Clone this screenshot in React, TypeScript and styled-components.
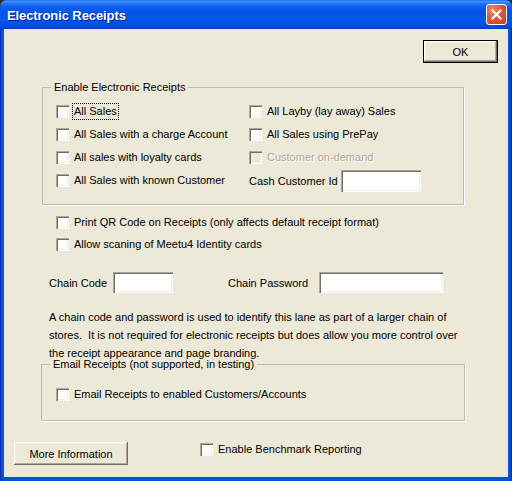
import React from "react";
import styled, { createGlobalStyle, css } from "styled-components";

const GlobalStyle = createGlobalStyle`
  html, body {
    margin: 0;
    padding: 0;
    background: #2b2b2b;
  }
  body {
    font-family: "Liberation Sans", Arial, sans-serif;
    font-size: 11px;
    color: #000;
  }
`;

const sunken = css`
  box-shadow: inset 1px 1px 0 #aca899, inset 2px 2px 0 #716f64,
    inset -1px -1px 0 #ffffff, inset -2px -2px 0 #f1efe2;
`;

const raised = css`
  box-shadow: inset -1px -1px 0 #716f64, inset 1px 1px 0 #ffffff,
    inset -2px -2px 0 #aca899, inset 2px 2px 0 #f1efe2;
`;

function Dialog() {
  return (
    <Window>
      <TitleBar>
        <Title>Electronic Receipts</Title>
        <CloseButton aria-label="Close">
          <svg width="11" height="11" viewBox="0 0 11 11">
            <path d="M1.5 1.5 L9.5 9.5 M9.5 1.5 L1.5 9.5" stroke="#fff" strokeWidth="2.2" strokeLinecap="square" />
          </svg>
        </CloseButton>
      </TitleBar>

      <Client>
        <TopRow>
          <Button $default $width={75}>OK</Button>
        </TopRow>

        <GroupBox $left={38} $width={422} $top={18}>
          <Legend>Enable Electronic Receipts</Legend>
          <CheckGrid>
            <Check label="All Sales" focused />
            <Check label="All Layby (lay away) Sales" />
            <Check label="All Sales with a charge Account" />
            <Check label="All Sales using PrePay" />
            <Check label="All sales with loyalty cards" />
            <Check label="Customer on-demand" disabled />
            <Check label="All Sales with known Customer" />
            <Field>
              <FieldLabel $width={92}>Cash Customer Id</FieldLabel>
              <TextBox $width={80} $height={22} />
            </Field>
          </CheckGrid>
        </GroupBox>

        <Options>
          <Check label="Print QR Code on Receipts (only affects default receipt format)" />
          <Check label="Allow scaning of Meetu4 Identity cards" />
        </Options>

        <ChainRow>
          <FieldLabel $width={64}>Chain Code</FieldLabel>
          <TextBox $width={60} $height={21} />
          <FieldLabel $width={91} $gap={55}>Chain Password</FieldLabel>
          <TextBox $width={124} $height={21} />
        </ChainRow>

        <Note>
          A chain code and password is used to identify this lane as part of a larger chain of
          <br />
          stores.&nbsp; It is not required for electronic receipts but does allow you more control over
          <br />
          the receipt appearance and page branding.
        </Note>

        <GroupBox $left={37} $width={424} $top={-4}>
          <Legend>Email Receipts (not supported, in testing)</Legend>
          <EmailBody>
            <Check label="Email Receipts to enabled Customers/Accounts" />
          </EmailBody>
        </GroupBox>

        <BottomRow>
          <MoreButton $width={114}>More Information</MoreButton>
          <BenchmarkSlot>
            <Check label="Enable Benchmark Reporting" />
          </BenchmarkSlot>
        </BottomRow>
      </Client>
    </Window>
  );
}

function Check({ label, focused, disabled }: { label: string; focused?: boolean; disabled?: boolean }) {
  return (
    <CheckItem $disabled={disabled}>
      <Box $disabled={disabled} />
      <CheckText $focused={focused}>{label}</CheckText>
    </CheckItem>
  );
}

export default function App() {
  return (
    <>
      <GlobalStyle />
      <Dialog />
    </>
  );
}

const Window = styled.div`
  width: 512px;
  height: 481px;
  box-sizing: border-box;
  display: flex;
  flex-direction: column;
  border-radius: 7px 7px 0 0;
  overflow: hidden;
  background: linear-gradient(
    to right,
    #00138c 0,
    #0a47d8 1px,
    #0b50e2 3px,
    #0b50e2 calc(100% - 3px),
    #0a45d0 calc(100% - 1px),
    #00138c 100%
  );
`;

const TitleBar = styled.div`
  height: 29px;
  flex: none;
  display: flex;
  align-items: center;
  justify-content: space-between;
  padding: 2px 5px 0 7px;
  box-sizing: border-box;
  background: linear-gradient(
    180deg,
    #0a5bf2 0px,
    #4a9cff 1px,
    #2a7cf8 3px,
    #0c5eec 7px,
    #0055e5 13px,
    #0057e9 21px,
    #004cdc 26px,
    #003fbf 29px
  );
`;

const Title = styled.span`
  color: #fff;
  font-family: "Liberation Sans", Arial, sans-serif;
  font-weight: bold;
  font-size: 13px;
  letter-spacing: -0.1px;
  text-shadow: 1px 1px 0 #0a1a8a;
`;

const CloseButton = styled.button`
  width: 21px;
  height: 21px;
  margin-top: -2px;
  padding: 0;
  box-sizing: border-box;
  border: 1px solid #fff;
  border-radius: 3px;
  display: flex;
  align-items: center;
  justify-content: center;
  background: radial-gradient(circle at 30% 30%, #f08a6c 0%, #e2583a 45%, #c83d1c 100%);
`;

const Client = styled.div`
  flex: 1;
  margin: 0 4px 4px;
  background: #ece9d8;
  display: flex;
  flex-direction: column;
  padding-top: 11px;
`;

const TopRow = styled.div`
  display: flex;
  justify-content: flex-end;
  padding-right: 10px;
`;

const Button = styled.button<{ $default?: boolean; $width: number }>`
  width: ${(p) => p.$width}px;
  height: 23px;
  padding: 0;
  box-sizing: border-box;
  font-family: "Liberation Sans", Arial, sans-serif;
  font-size: 11px;
  color: #000;
  background: #ece9d8;
  border: ${(p) => (p.$default ? "1px solid #000" : "none")};
  ${raised}
`;

const MoreButton = styled(Button)`
  margin-top: 4px;
`;

const GroupBox = styled.fieldset<{ $left: number; $width: number; $top: number }>`
  margin: ${(p) => p.$top}px 0 0 ${(p) => p.$left}px;
  width: ${(p) => p.$width}px;
  box-sizing: border-box;
  padding: 6px 0 12px 13px;
  border: 1px solid #bfbcad;
  box-shadow: 1px 1px 0 #ffffff;
  min-width: 0;
`;

const Legend = styled.legend`
  margin-left: -5px;
  padding: 0 3px;
  line-height: 13px;
  font-size: 11px;
`;

const CheckGrid = styled.div`
  display: grid;
  grid-template-columns: 193px 1fr;
  grid-auto-rows: 23px;
  align-items: center;
`;

const CheckItem = styled.label<{ $disabled?: boolean }>`
  display: flex;
  align-items: center;
  gap: 5px;
  height: 22px;
  white-space: nowrap;
  color: ${(p) => (p.$disabled ? "#aca899" : "#000")};
  text-shadow: ${(p) => (p.$disabled ? "1px 1px 0 #ffffff" : "none")};
`;

const Box = styled.span<{ $disabled?: boolean }>`
  width: 13px;
  height: 13px;
  flex: none;
  background: ${(p) => (p.$disabled ? "#ece9d8" : "#ffffff")};
  ${sunken}
`;

const CheckText = styled.span<{ $focused?: boolean }>`
  line-height: 13px;
  outline: ${(p) => (p.$focused ? "1px dotted #000" : "none")};
  outline-offset: 1px;
`;

const Field = styled.div`
  display: flex;
  align-items: center;
  height: 22px;
`;

const FieldLabel = styled.span<{ $width: number; $gap?: number }>`
  width: ${(p) => p.$width}px;
  margin-left: ${(p) => p.$gap ?? 0}px;
  flex: none;
  white-space: nowrap;
`;

const TextBox = styled.div<{ $width: number; $height: number }>`
  width: ${(p) => p.$width}px;
  height: ${(p) => p.$height}px;
  flex: none;
  background: #fff;
  ${sunken}
`;

const Options = styled.div`
  margin: 6px 0 0 52px;
  display: flex;
  flex-direction: column;
`;

const ChainRow = styled.div`
  display: flex;
  align-items: center;
  margin-top: 17px;
  padding-left: 45px;
`;

const Note = styled.p`
  margin: 15px 0 0 45px;
  line-height: 18px;
  white-space: nowrap;
`;

const EmailBody = styled.div`
  padding: 6px 0 3px 1px;
`;

const BottomRow = styled.div`
  display: flex;
  align-items: flex-start;
  margin-top: 17px;
  padding-left: 10px;
`;

const BenchmarkSlot = styled.div`
  margin-left: 72px;
`;
